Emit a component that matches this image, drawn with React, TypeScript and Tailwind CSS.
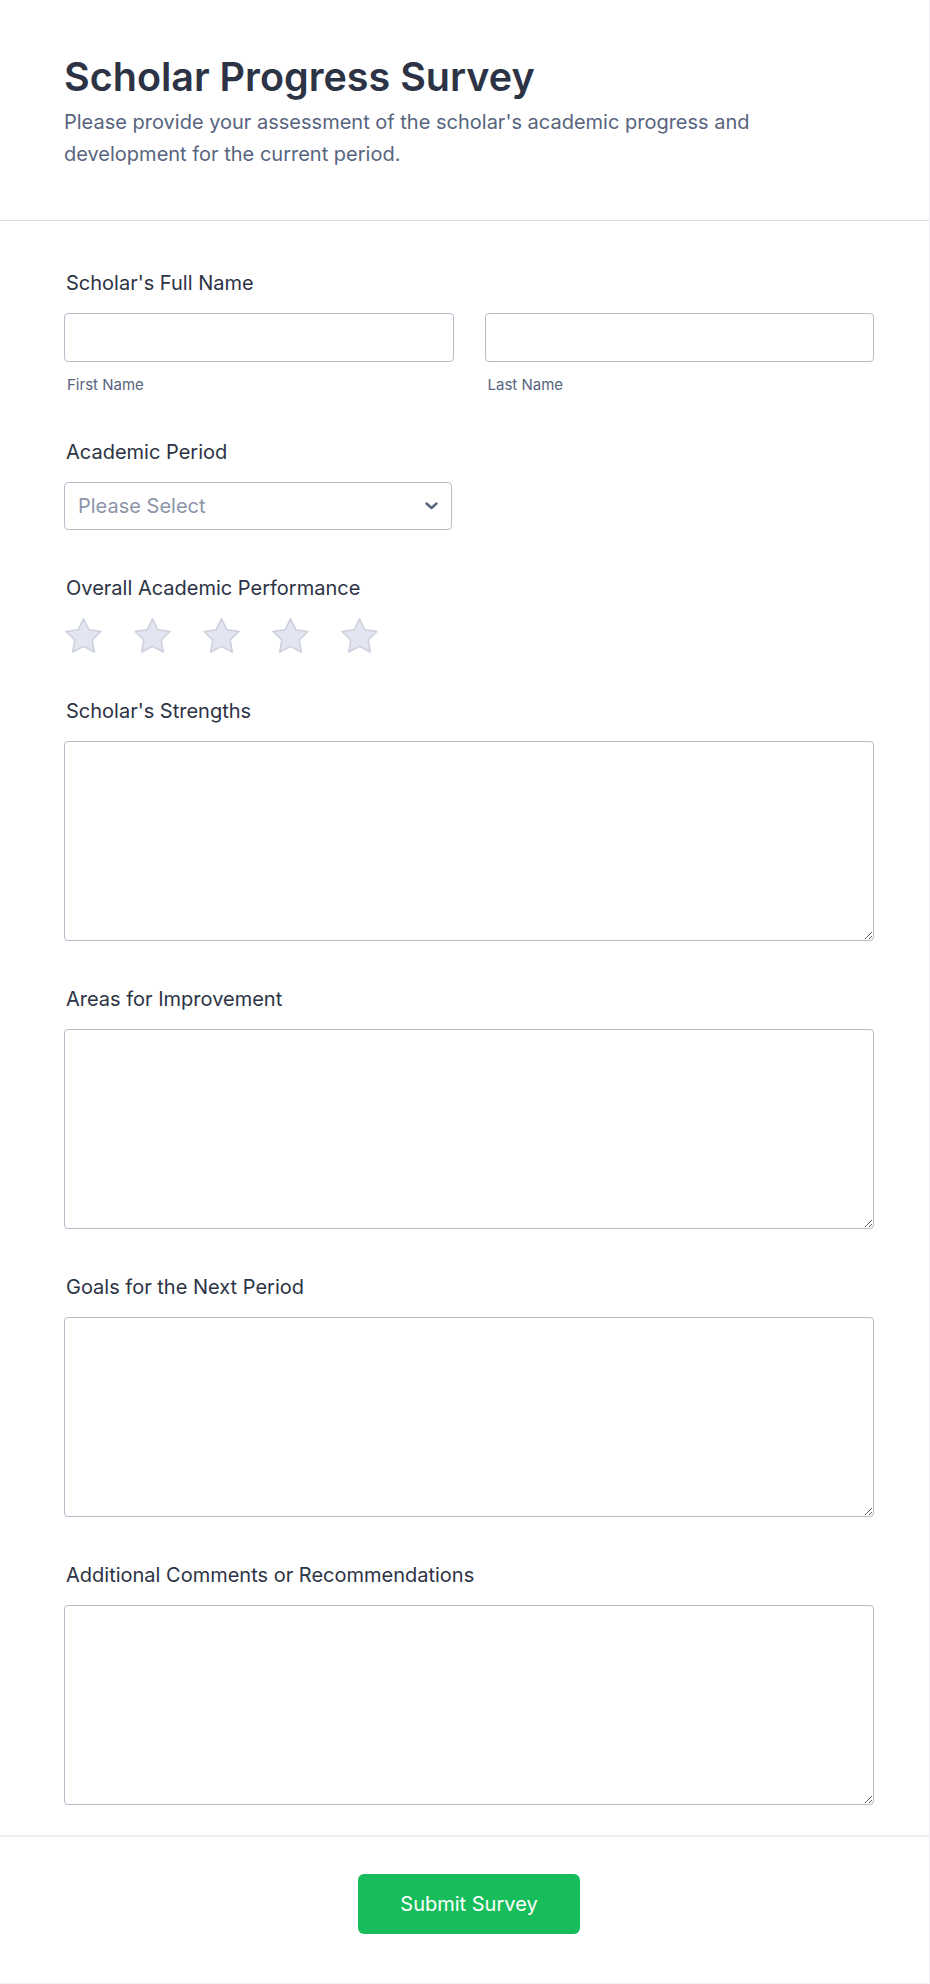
import React from 'react';

const Star: React.FC = () => (
  <svg width="37" height="35" viewBox="1.5 1.5 21 20.1" fill="#e3e6f0" stroke="#cbd0dc" strokeWidth={0.9} strokeLinejoin="round">
    <path d="M12 2l3.09 6.26L22 9.27l-5 4.87 1.18 6.88L12 17.77l-6.18 3.25L7 14.14 2 9.27l6.91-1.01L12 2z" />
  </svg>
);

const Label: React.FC<{ children: React.ReactNode }> = ({ children }) => (
  <div className="text-[20px] leading-[24px] font-normal text-[#2c3345] pl-[2px] mb-[18px]">{children}</div>
);

const TextArea: React.FC = () => (
  <textarea className="block w-full h-[200px] rounded-[4px] border border-[#b8bdc9] bg-white outline-none" />
);

const App: React.FC = () => {
  return (
    <div className="w-[930px] min-h-[1984px] bg-white border-r border-b border-[#f1f1f5] font-['Inter','Noto_Sans',sans-serif]">
      {/* Header */}
      <div className="px-16 pt-[53px] pb-[50px] border-b border-[#d8dae6]">
        <h1 className="text-[39.5px] leading-[48px] font-semibold text-[#2c3345]">Scholar Progress Survey</h1>
        <p className="mt-[5px] w-[811px] text-[20px] leading-[32px] text-[#57647e]">
          Please provide your assessment of the scholar's academic progress and development for the current period.
        </p>
      </div>

      {/* Fields */}
      <div className="pl-16 pr-[55px] pt-[50px] pb-[30px] flex flex-col gap-[46px]">
        <div>
          <Label>Scholar's Full Name</Label>
          <div className="grid grid-cols-2 gap-[31px]">
            <div>
              <input className="block w-full h-[49px] rounded-[4px] border border-[#b8bdc9] outline-none" />
              <div className="mt-[14px] pl-[3px] text-[15px] leading-[18px] text-[#57647e]">First Name</div>
            </div>
            <div>
              <input className="block w-full h-[49px] rounded-[4px] border border-[#b8bdc9] outline-none" />
              <div className="mt-[14px] pl-[3px] text-[15px] leading-[18px] text-[#57647e]">Last Name</div>
            </div>
          </div>
        </div>

        <div>
          <Label>Academic Period</Label>
          <div className="w-[388px] h-[48px] rounded-[4px] border border-[#b8bdc9] flex items-center justify-between pl-[13px] pr-[13px]">
            <span className="text-[20px] text-[#8c94a9]">Please Select</span>
            <svg width="13" height="8" viewBox="0 0 13 8" fill="none" stroke="#57647e" strokeWidth={2.4} strokeLinecap="round" strokeLinejoin="round">
              <path d="M1.5 1.5l5 4.5 5-4.5" />
            </svg>
          </div>
        </div>

        <div>
          <Label>Overall Academic Performance</Label>
          <div className="flex gap-[32px] pl-[1px]">
            <Star />
            <Star />
            <Star />
            <Star />
            <Star />
          </div>
        </div>

        <div>
          <Label>Scholar's Strengths</Label>
          <TextArea />
        </div>

        <div>
          <Label>Areas for Improvement</Label>
          <TextArea />
        </div>

        <div>
          <Label>Goals for the Next Period</Label>
          <TextArea />
        </div>

        <div>
          <Label>Additional Comments or Recommendations</Label>
          <TextArea />
        </div>
      </div>

      {/* Footer */}
      <div className="border-t-2 border-[#ececf2] pt-[37px] pb-[49px] pl-16 pr-[55px] flex justify-center">
        <button className="w-[222px] h-[60px] rounded-[6px] bg-[#18bd5b] text-white text-[20px] font-normal">
          Submit Survey
        </button>
      </div>
    </div>
  );
};

export default App;
